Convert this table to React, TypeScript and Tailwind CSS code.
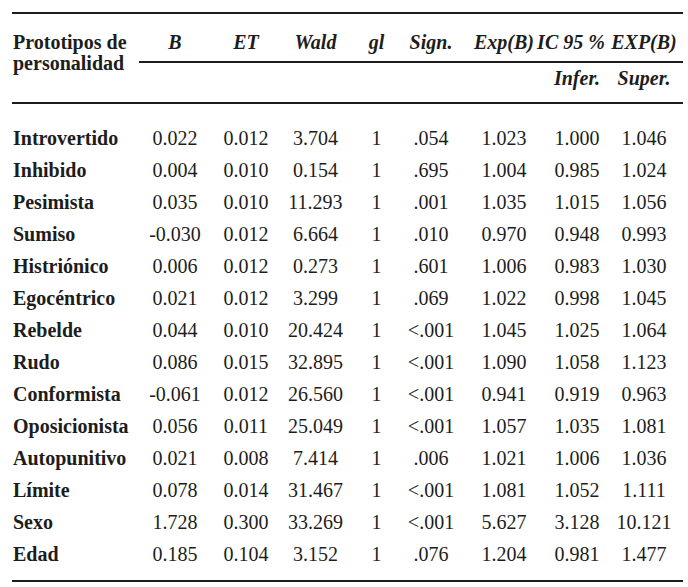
const rows: [string, string, string, string, string, string, string, string, string][] = [
  ["Introvertido", "0.022", "0.012", "3.704", "1", ".054", "1.023", "1.000", "1.046"],
  ["Inhibido", "0.004", "0.010", "0.154", "1", ".695", "1.004", "0.985", "1.024"],
  ["Pesimista", "0.035", "0.010", "11.293", "1", ".001", "1.035", "1.015", "1.056"],
  ["Sumiso", "-0.030", "0.012", "6.664", "1", ".010", "0.970", "0.948", "0.993"],
  ["Histriónico", "0.006", "0.012", "0.273", "1", ".601", "1.006", "0.983", "1.030"],
  ["Egocéntrico", "0.021", "0.012", "3.299", "1", ".069", "1.022", "0.998", "1.045"],
  ["Rebelde", "0.044", "0.010", "20.424", "1", "<.001", "1.045", "1.025", "1.064"],
  ["Rudo", "0.086", "0.015", "32.895", "1", "<.001", "1.090", "1.058", "1.123"],
  ["Conformista", "-0.061", "0.012", "26.560", "1", "<.001", "0.941", "0.919", "0.963"],
  ["Oposicionista", "0.056", "0.011", "25.049", "1", "<.001", "1.057", "1.035", "1.081"],
  ["Autopunitivo", "0.021", "0.008", "7.414", "1", ".006", "1.021", "1.006", "1.036"],
  ["Límite", "0.078", "0.014", "31.467", "1", "<.001", "1.081", "1.052", "1.111"],
  ["Sexo", "1.728", "0.300", "33.269", "1", "<.001", "5.627", "3.128", "10.121"],
  ["Edad", "0.185", "0.104", "3.152", "1", ".076", "1.204", "0.981", "1.477"],
];

const cols = "grid grid-cols-[127px_72px_70px_69px_53px_56px_90px_56px_78px]";

function HeadCell({ children, shift = "" }: { children: React.ReactNode; shift?: string }) {
  return (
    <div className="flex justify-center border-b-2 border-[#1d1d1b] pt-[18px] leading-[21px] italic font-bold whitespace-nowrap">
      <span className={shift}>{children}</span>
    </div>
  );
}

function Header() {
  return (
    <div className={`${cols} grid-rows-[49px_39px] border-t-2 border-[#1d1d1b]`}>
      <div className="row-span-2 pt-[18px] pl-[1px] leading-[21px] font-bold">
        Prototipos de
        <br />
        personalidad
      </div>
      <HeadCell>B</HeadCell>
      <HeadCell>ET</HeadCell>
      <HeadCell>Wald</HeadCell>
      <HeadCell>gl</HeadCell>
      <HeadCell>Sign.</HeadCell>
      <HeadCell>Exp(B)</HeadCell>
      <HeadCell shift="mr-[12px]">IC 95 %</HeadCell>
      <HeadCell>EXP(B)</HeadCell>
      <div className="col-span-5" />
      <div />
      <div className="flex justify-center pt-[5px] leading-[21px] italic font-bold">Infer.</div>
      <div className="flex justify-center pt-[5px] leading-[21px] italic font-bold">Super.</div>
    </div>
  );
}

function Body() {
  return (
    <div className="border-t-2 border-b-2 border-[#1d1d1b] pt-[18px] pb-[10px]">
      {rows.map((r) => (
        <div key={r[0]} className={`${cols} h-[32px] leading-[32px]`}>
          <div className="pl-[1px] font-bold whitespace-nowrap">{r[0]}</div>
          {r.slice(1).map((v, i) => (
            <div key={i} className="text-center whitespace-nowrap">
              {v}
            </div>
          ))}
        </div>
      ))}
    </div>
  );
}

export default function App() {
  return (
    <div className="w-[688px] h-[587px] bg-white pt-[12px] pl-[12px] [font-family:'Liberation_Serif',serif] text-[20px] text-[#1d1d1b]">
      <div className="w-[671px]">
        <Header />
        <Body />
      </div>
    </div>
  );
}
